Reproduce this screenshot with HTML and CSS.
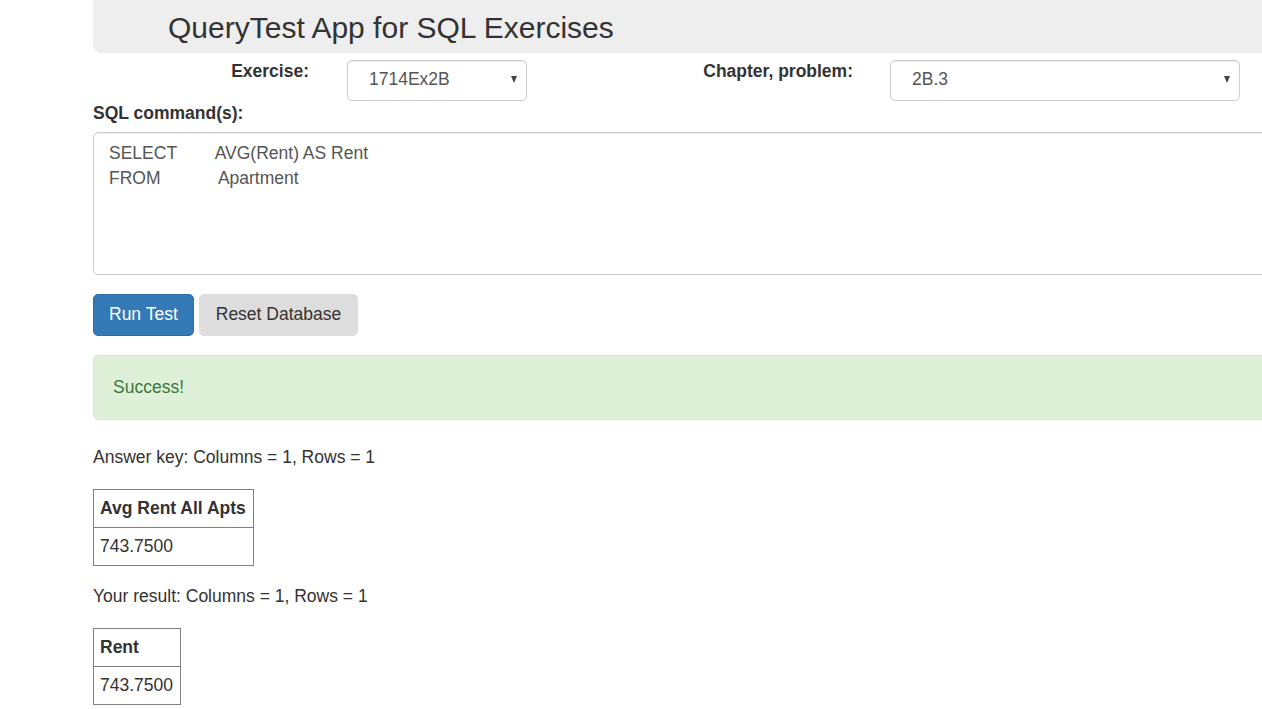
FILE: index.html
```html
<!DOCTYPE html>
<html>
<head>
<meta charset="utf-8">
<title>QueryTest App for SQL Exercises</title>
<link rel="stylesheet" href="styles.css">
</head>
<body>
<div class="page">
  <header class="header">
    <h1 class="title">QueryTest App for SQL Exercises</h1>
  </header>

  <div class="form-row">
    <label class="lbl lbl-ex">Exercise:</label>
    <div class="sel sel-ex">
      <select class="sel-input"><option>1714Ex2B</option></select>
    </div>
    <label class="lbl lbl-ch">Chapter, problem:</label>
    <div class="sel sel-ch">
      <select class="sel-input"><option>2B.3</option></select>
    </div>
  </div>

  <label class="sql-label">SQL command(s):</label>
  <textarea class="sql">SELECT        AVG(Rent) AS Rent
FROM            Apartment</textarea>

  <div class="buttons">
    <button class="btn btn-primary">Run Test</button>
    <button class="btn btn-default">Reset Database</button>
  </div>

  <div class="alert">Success!</div>

  <p class="info">Answer key: Columns = 1, Rows = 1</p>
  <table class="result">
    <tr><th>Avg Rent All Apts</th></tr>
    <tr><td>743.7500</td></tr>
  </table>

  <p class="info info-2">Your result: Columns = 1, Rows = 1</p>
  <table class="result">
    <tr><th>Rent</th></tr>
    <tr><td>743.7500</td></tr>
  </table>
</div>
</body>
</html>
```

FILE: styles.css
```css
html, body {
  margin: 0;
  padding: 0;
  overflow: hidden;
  background: #fff;
}
body {
  font-family: "Liberation Sans", Arial, sans-serif;
  font-size: 17.5px;
  line-height: 25px;
  color: #333;
}
.page {
  margin-left: 93px;
  width: 1240px;
}
.header {
  background: #eee;
  height: 53px;
  border-radius: 0 0 0 8px;
}
.title {
  margin: 0;
  padding-left: 75px;
  font-size: 30px;
  font-weight: normal;
  line-height: 56px;
  color: #333;
}
.form-row {
  display: flex;
  align-items: flex-start;
  margin-top: 7px;
  height: 41px;
}
.lbl {
  font-weight: bold;
  text-align: right;
  padding-right: 15px;
  margin-top: -1px;
  box-sizing: border-box;
}
.lbl-ex { width: 231px; margin-right: 23px; }
.lbl-ch { width: 341px; margin-right: 22px; }
.sel {
  position: relative;
  height: 41px;
}
.sel-ex { width: 180px; }
.sel-ch { width: 350px; }
.sel-input {
  -webkit-appearance: none;
  appearance: none;
  width: 100%;
  height: 41px;
  box-sizing: border-box;
  border: 1px solid #ccc;
  border-radius: 5px;
  background: #fff;
  padding: 0 0 4px 21px;
  font-family: inherit;
  font-size: 17.5px;
  color: #555;
  box-shadow: inset 0 1px 1px rgba(0,0,0,.075);
}
.sel::after {
  content: "";
  position: absolute;
  right: 10px;
  top: 16px;
  width: 0;
  height: 0;
  border-left: 3.5px solid transparent;
  border-right: 3.5px solid transparent;
  border-top: 7px solid #444;
  pointer-events: none;
}
.sql-label {
  display: block;
  font-weight: bold;
  margin-top: 0;
  margin-bottom: 6px;
}
.sql {
  display: block;
  width: 100%;
  height: 143px;
  box-sizing: border-box;
  border: 1px solid #ccc;
  border-radius: 5px;
  padding: 8px 15px 6px;
  font-family: inherit;
  font-size: 17.5px;
  line-height: 25px;
  color: #555;
  resize: none;
  white-space: pre;
  box-shadow: inset 0 1px 1px rgba(0,0,0,.075);
  margin: 0;
}
.buttons {
  display: flex;
  gap: 5px;
  margin-top: 19px;
}
.btn {
  height: 42px;
  padding: 0 15px 2px;
  border-radius: 5px;
  font-family: inherit;
  font-size: 17.5px;
  line-height: 25px;
  border: 1px solid transparent;
}
.btn-primary {
  background: #337ab7;
  border-color: #2e6da4;
  color: #fff;
}
.btn-default {
  padding-left: 16px;
  padding-right: 16px;
  background: #ddd;
  border-color: #ddd;
  color: #333;
}
.alert {
  margin-top: 19px;
  height: 65px;
  box-sizing: border-box;
  padding: 19px;
  background: #dff0d8;
  border: 1px solid #d6e9c6;
  border-radius: 5px;
  color: #3c763d;
}
.info {
  margin: 25px 0 19px;
}
.info-2 {
  margin-top: 18px;
}
.result {
  border-collapse: collapse;
  border: 1px solid #808080;
}
.result th, .result td {
  border: 1px solid #808080;
  padding: 6px 7px 6px 6px;
  text-align: left;
  line-height: 25px;
}
.result th { font-weight: bold; }
```
